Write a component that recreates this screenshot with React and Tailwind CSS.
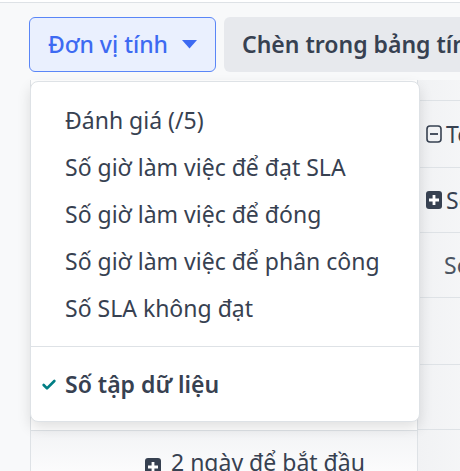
import { Check } from 'lucide-react';

const font = { fontFamily: '"Noto Sans", "Open Sans", sans-serif' };

function MinusBox() {
  return (
    <svg width="16" height="18" viewBox="0 0 16 18" className="shrink-0">
      <rect x="1" y="1" width="14" height="16" rx="3" fill="none" stroke="#374151" strokeWidth="1.6" />
      <path d="M4 9h8" stroke="#374151" strokeWidth="1.8" />
    </svg>
  );
}

function PlusBox() {
  return (
    <svg width="16" height="18" viewBox="0 0 16 18" className="shrink-0">
      <rect x="0" y="0" width="16" height="18" rx="3" fill="#374151" />
      <path d="M8 4v10M3 9h10" stroke="#fff" strokeWidth="2.8" />
    </svg>
  );
}

const measures = [
  'Đánh giá (/5)',
  'Số giờ làm việc để đạt SLA',
  'Số giờ làm việc để đóng',
  'Số giờ làm việc để phân công',
  'Số SLA không đạt',
];

export default function App() {
  return (
    <div
      className="relative w-[460px] h-[471px] overflow-hidden bg-[#f8f9fa] text-[#374151]"
      style={font}
    >
      {/* top strip */}
      <div className="h-[3px] bg-white border-b border-[#dee2e6]" />

      {/* control panel buttons */}
      <div className="flex gap-2 pl-[29px] pt-[14px]">
        <button className="shrink-0 flex items-center h-[55px] w-[187px] pl-[18px] rounded-md border border-[#5a86f7] bg-[#eaf0fe] text-[#3d6af2] text-[23px] font-medium whitespace-nowrap">
          Đơn vị tính
          <svg width="15" height="9" viewBox="0 0 15 9" className="ml-[14px]">
            <path d="M0 0h15L7.5 8.5z" fill="#3d6af2" />
          </svg>
        </button>
        <button className="shrink-0 flex items-center h-[55px] pl-[18px] pr-4 rounded-md bg-[#e7e9ed] text-[#374151] text-[23px] font-semibold whitespace-nowrap">
          Chèn trong bảng tính
        </button>
      </div>

      {/* pivot table behind the menu */}
      <div className="ml-[30px] mt-[8px] flex">
        <div className="w-[388px] shrink-0 border-l border-r border-[#dee2e6]">
          <div className="h-[350px] bg-white" />
          <div className="h-[60px] border-t border-[#dee2e6] bg-gradient-to-b from-[#f3f4f6] to-white flex items-start pl-[114px] pt-[20px] gap-[10px] text-[23px]">
            <div className="mt-[7px]"><PlusBox /></div>
            <span className="whitespace-nowrap leading-none">2 ngày để bắt đầu</span>
          </div>
        </div>
        <div className="flex-1 bg-gradient-to-r from-[#f1f2f4] to-[#f8f9fa] text-[23px] whitespace-nowrap">
          <div className="h-[21px] border-b border-[#dee2e6]" />
          <div className="h-[67px] border-b border-[#dee2e6] flex items-center pl-[8px] gap-[4px]">
            <MinusBox />
            <span>Tổng</span>
          </div>
          <div className="h-[65px] border-b border-[#dee2e6] flex items-center pl-[8px] gap-[4px]">
            <PlusBox />
            <span>Số</span>
          </div>
          <div className="h-[65px] border-b border-[#dee2e6] flex items-center pl-[26px] text-[#4b5563]">
            Số
          </div>
          <div className="h-[67px] border-b border-[#dee2e6]" />
          <div className="h-[65px] border-b border-[#dee2e6]" />
          <div className="h-[60px]" />
        </div>
      </div>

      {/* dropdown menu */}
      <div className="absolute left-[30px] top-[81px] w-[390px] h-[341px] rounded-lg border border-[#dee2e6] bg-white shadow-[0_6px_14px_rgba(0,0,0,0.12)]">
        <div className="pt-[15px]">
          {measures.map((m) => (
            <div key={m} className="h-[47px] flex items-center pl-[34px] text-[23px] text-[#374151] whitespace-nowrap">
              {m}
            </div>
          ))}
        </div>
        <div className="mt-[14px] border-t border-[#dee2e6]" />
        <div className="mt-[14px] h-[47px] flex items-center text-[23px] font-semibold text-[#374151] whitespace-nowrap">
          <Check className="ml-[10px] w-[16px] h-[16px] text-[#017e84]" strokeWidth={4} />
          <span className="ml-[8px]">Số tập dữ liệu</span>
        </div>
      </div>
    </div>
  );
}
